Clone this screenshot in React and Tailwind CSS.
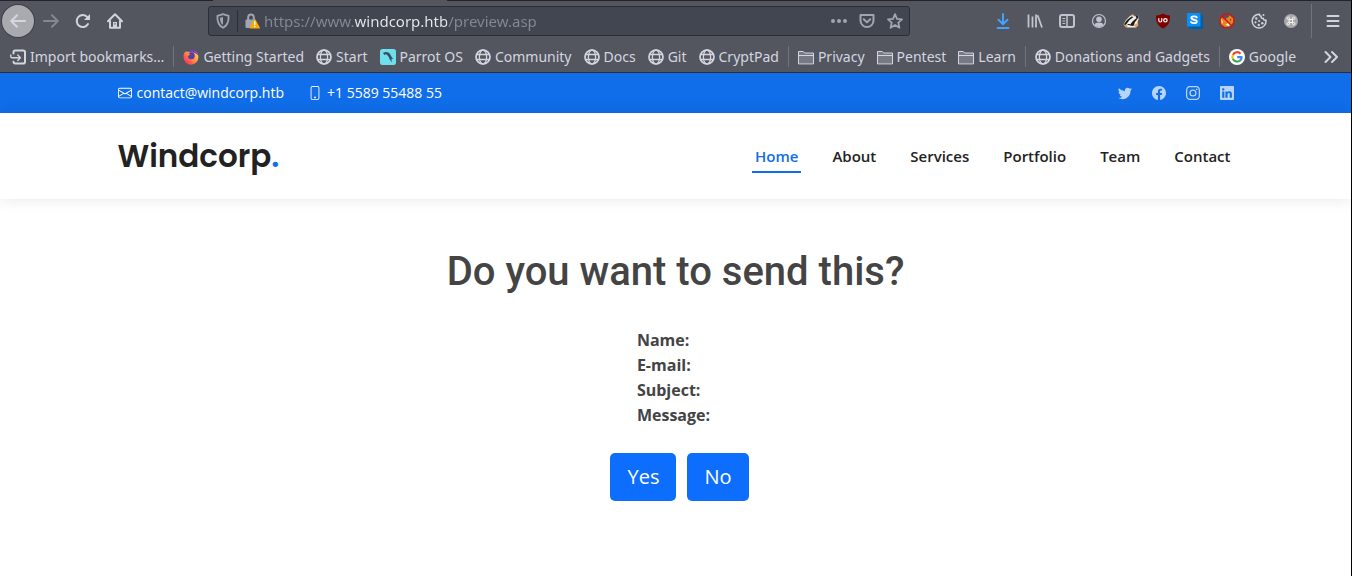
import {
  BsEnvelope,
  BsPhone,
  BsTwitter,
  BsFacebook,
  BsInstagram,
  BsLinkedin,
} from "react-icons/bs";

function Icon({ children, className = "size-4", ...rest }) {
  return (
    <svg
      viewBox="0 0 16 16"
      fill="none"
      stroke="currentColor"
      strokeWidth="2"
      strokeLinecap="round"
      strokeLinejoin="round"
      aria-hidden="true"
      className={`shrink-0 ${className}`}
      {...rest}
    >
      {children}
    </svg>
  );
}

const BackIcon = () => (
  <Icon>
    <path d="M15 8H1.5M7 2.2 1.2 8 7 13.8" />
  </Icon>
);

const ForwardIcon = () => (
  <Icon>
    <path d="M1 8h13.5M9 2.2 14.8 8 9 13.8" />
  </Icon>
);

const ReloadIcon = () => (
  <Icon>
    <path d="M13 11a6 6 0 1 1-.6-6.8" />
    <path d="M15 1v6H9z" fill="currentColor" stroke="none" />
  </Icon>
);

const HomeIcon = () => (
  <Icon>
    <path d="M1 8.3 8 1.3l7 7M3 8v6.8h10V8" />
    <path d="M6 9h4v5H6z" fill="currentColor" stroke="none" />
    <path d="M8 10.2v1.4" stroke="#53555f" strokeWidth="1.4" strokeLinecap="butt" />
  </Icon>
);

const ShieldIcon = () => (
  <Icon>
    <path d="M8 1.2 13.6 2.8c.3 5.6-.9 9.600-5.600 12C3.300 12.400 2.100 8.400 2.400 2.800z" strokeWidth="1.8" />
    <path d="M8 4v8C5.700 10.500 5 8.500 5 4.800z" fill="currentColor" stroke="none" />
  </Icon>
);

const LockWarningIcon = () => (
  <Icon>
    <path d="M4.200 7V4.400a2.800 2.800 0 0 1 5.600 0V6" />
    <rect x="1.500" y="6.500" width="9.500" height="8.500" rx="1" fill="currentColor" stroke="none" />
    <path d="M10.800 6.800 15.200 14.800H6.400z" fill="#ffa800" stroke="#ffa800" strokeWidth="1.500" />
    <path d="M10.800 8.600v3M10.800 13.500v.200" stroke="#fff" strokeWidth="1.400" />
  </Icon>
);

const DotsIcon = () => (
  <Icon>
    <g fill="currentColor" stroke="none">
      <circle cx="2" cy="8" r="2" />
      <circle cx="8" cy="8" r="2" />
      <circle cx="14" cy="8" r="2" />
    </g>
  </Icon>
);

const PocketIcon = () => (
  <Icon>
    <path d="M1.500 2h13v5.500a6.500 6.500 0 0 1-13 0z" />
    <path d="M4.800 6.300 8 9.400l3.200-3.100" />
  </Icon>
);

const StarIcon = () => (
  <Icon strokeWidth="1.800">
    <path d="m8 1.200 2 4.600 5 .5-3.700 3.400 1.100 5L8 12.100l-4.400 2.600 1.100-5L1 6.300l5-.5z" />
  </Icon>
);

const DownloadIcon = () => (
  <Icon>
    <path d="M8 1v10M3.500 6.800 8 11.200l4.500-4.400" />
    <path d="M2.500 15h11" />
  </Icon>
);

const LibraryIcon = () => (
  <Icon strokeLinecap="butt">
    <path d="M1.500 1.500v13M5.500 3.500v11M9 1.500v13M10.600 2.200 15 14.500" strokeWidth="1.800" />
  </Icon>
);

const SidebarIcon = () => (
  <Icon>
    <rect x="1" y="2" width="14" height="12" rx="2" />
    <path d="M8 2v12" strokeWidth="1.500" />
    <path d="M3.800 5.500h2M3.800 8h2M3.800 10.500h2" strokeWidth="1" />
  </Icon>
);

const AccountIcon = () => (
  <Icon>
    <circle cx="8" cy="8" r="6.500" strokeWidth="1.200" />
    <circle cx="8" cy="6.200" r="2.800" fill="currentColor" stroke="none" />
    <path d="M3.400 12c.6-2 2.200-2.600 4.600-2.600s4 .6 4.600 2.600A6 6 0 0 1 8 14a6 6 0 0 1-4.600-2z" fill="currentColor" stroke="none" />
  </Icon>
);

const BadgerIcon = () => (
  <Icon stroke="none">
    <path d="M.5 11.500 3 7l4-4L9.500 1.500 12 3.500l3.800-1-.3 4L14.500 9l.5 3-2 2.500H4z" fill="#f3eee6" />
    <path d="M.8 11.500 4 7l4.500-3.500 2 .5L6.500 7 2.800 12zM6.500 12.500 9.500 8.500 13 5.500l1.200 1L12 9l-1.500 4zM13 3l2.500-.5-.2 3-1.800.500z" fill="#1d1a18" />
    <path d="M7.500 3 9.800 1.300 12 3.300 9.800 2.800zM1 12.300l2.500-.8 1.500 2.500-2 .5zM10.500 12l4.500-2 .3 2.500-2.300 2z" fill="#e8a45c" />
    <path d="M5 11.500h1.500M9 10.800h1" stroke="#1d1a18" strokeWidth="1" />
  </Icon>
);

const BlockerIcon = () => (
  <Icon stroke="none">
    <path d="M8 .5c2 1.300 4.200 2 7 2 0 6-.8 9.800-7 13-6.200-3.200-7-7-7-13 2.800 0 5-.7 7-2z" fill="#800000" />
    <path d="M3.800 5.500v2a1.500 1.500 0 0 0 3 0v-2" stroke="#fff" strokeWidth="1.200" />
    <circle cx="10.400" cy="7.300" r="1.700" stroke="#fff" strokeWidth="1.200" />
  </Icon>
);

const StylusIcon = () => (
  <Icon stroke="none">
    <path d="M0 0h13l3 3v13H3l-3-3z" fill="#005fa8" />
    <path d="M0 0h13.500v13.500H0z" fill="#0c8ff5" />
    <path d="M9.800 4.300C8.800 3 4.300 2.900 4.300 5c0 2.200 5.500 1.200 5.500 3.500 0 2.200-4.700 2-5.800.5" stroke="#fff" strokeWidth="1.900" />
  </Icon>
);

const NoFoxIcon = () => (
  <Icon stroke="none">
    <path d="M1.500 4.500 6 6 9 4.500 11 2l1.500 2.200 2.300.8-.8 4.500-2.500 3.500L6 14l-4.500-3z" fill="#e8841c" />
    <path d="M2 5.500 4 9l-1 2zM6.500 11.500 9 10l3 .5-2.500 3z" fill="#ffe9c8" />
    <circle cx="11.500" cy="6.800" r=".700" fill="#5b2c0c" />
    <circle cx="8" cy="8" r="7.200" stroke="#d01515" strokeWidth="1.300" />
    <path d="m3 3 10 10" stroke="#d01515" strokeWidth="1.500" />
  </Icon>
);

const CookieIcon = () => (
  <Icon>
    <path d="M8.500 1.200A6.900 6.900 0 1 0 14.900 7c-1.500.7-2.700-.2-2.500-1.700-1.700.400-2.800-.600-2.200-2C9 3.200 8.400 2.300 8.500 1.200z" strokeWidth="1.500" />
    <g fill="currentColor" stroke="none">
      <circle cx="5.300" cy="5.500" r="1.200" />
      <circle cx="4.500" cy="9.300" r="1.100" />
      <circle cx="8.200" cy="8" r="1.100" />
      <circle cx="7.800" cy="12" r="1.200" />
      <circle cx="11.300" cy="10.300" r="1.200" />
      <circle cx="12.500" cy="2" r="1" />
    </g>
  </Icon>
);

const CommandIcon = () => (
  <Icon>
    <circle cx="8" cy="8" r="7" fill="#a9a9ab" stroke="none" />
    <path d="M6.500 6.500h3v3h-3zM6.500 6.500H5.300a1.200 1.200 0 1 1 1.200-1.200zM9.500 6.500V5.300a1.200 1.200 0 1 1 1.200 1.200zM9.500 9.500h1.200a1.200 1.200 0 1 1-1.200 1.200zM6.500 9.500v1.200a1.200 1.200 0 1 1-1.200-1.200z" stroke="#f5f5f5" strokeWidth="1" />
  </Icon>
);

const MenuIcon = () => (
  <Icon>
    <path d="M2.500 3h11M2.500 8h11M2.500 13h11" />
  </Icon>
);

const ImportIcon = () => (
  <Icon>
    <path d="M3.500 4.500V3.200C3.500 2 4.200 1.500 5.200 1.500h8c1.200 0 1.800.6 1.800 1.800v9.400c0 1.200-.6 1.800-1.800 1.800h-8c-1 0-1.700-.5-1.700-1.700" />
    <path d="M.8 6v1.500c0 .8.400 1.200 1.200 1.200h8M7.800 6l2.600 2.700-2.600 2.700" strokeWidth="1.400" />
  </Icon>
);

const GlobeIcon = () => (
  <Icon strokeWidth="1.300">
    <circle cx="8" cy="8" r="7" strokeWidth="1.700" />
    <ellipse cx="8" cy="8" rx="3.600" ry="7" />
    <path d="M1.800 5.500h12.400M1.800 10.500h12.400" />
  </Icon>
);

const FolderIcon = () => (
  <Icon strokeWidth="1">
    <path d="M.5 14.500v-12h4.800l1.400 1.500h8.800v10.500z" fill="#777a85" />
    <path d="M.5 6.500h15" />
  </Icon>
);

const FirefoxIcon = () => (
  <Icon stroke="none">
    <defs>
      <linearGradient id="flame" x1="14" y1="3" x2="3" y2="14" gradientUnits="userSpaceOnUse">
        <stop offset="0" stopColor="#ffd94a" />
        <stop offset=".45" stopColor="#ff9640" />
        <stop offset="1" stopColor="#ff3160" />
      </linearGradient>
    </defs>
    <path d="M2.500 2.500C.9 4.200.3 6 .5 8.500a7.400 7.400 0 0 0 14.900-.5c0-2.500-1.200-5-3.600-6.300L8 3z" fill="url(#flame)" />
    <path d="M6.500 1.500C10 0 14.500 2.200 15.200 6.500 13 4 10.500 3 7.500 3.600z" fill="#7a3bd0" />
    <circle cx="8.300" cy="6.800" r="3.500" fill="#5a3f9e" />
    <path d="M3 4.500c1.800-.5 3.500 0 4.500 1-1.500.3-2 1-2.200 2z" fill="#ff8a45" />
  </Icon>
);

const ParrotIcon = () => (
  <Icon stroke="none">
    <rect width="16" height="16" rx="2.500" fill="#6fdfee" />
    <path d="M3 4c2.500-1.500 5.700-1.200 7.300 1.500 1 1.800 1.700 3.200 3.200 4.500l-2-.3.200 4-1.300-2.800-.6-.2C9 8 7.500 5.500 5.500 5L5 6.200C4.200 5.700 3.500 5 3 4z" fill="#35525c" />
  </Icon>
);

const GoogleIcon = () => (
  <Icon stroke="none">
    <circle cx="8" cy="8" r="8" fill="#fff" />
    <g strokeWidth="2.200" strokeLinecap="butt" fill="none">
      <path d="M11.500 4.700A4.600 4.600 0 0 0 3.900 5.900" stroke="#ea4335" />
      <path d="M4 5.700a4.600 4.600 0 0 0 0 4.600" stroke="#fbbc05" />
      <path d="M3.900 10.100a4.600 4.600 0 0 0 7.100 1.400" stroke="#34a853" />
      <path d="M10.900 11.600A4.600 4.600 0 0 0 12.600 8.200H8.200" stroke="#4285f4" />
    </g>
  </Icon>
);

const extensions = [
  { label: "Downloads", icon: DownloadIcon, tone: "text-[#45a1ff]" },
  { label: "Library", icon: LibraryIcon, tone: "text-[#c0c3cf]" },
  { label: "Sidebars", icon: SidebarIcon, tone: "text-[#c0c3cf]" },
  { label: "Account", icon: AccountIcon, tone: "text-[#c0c3cf]" },
  { label: "Privacy Badger", icon: BadgerIcon, tone: "" },
  { label: "Content blocker", icon: BlockerIcon, tone: "" },
  { label: "Styles", icon: StylusIcon, tone: "" },
  { label: "Proxy off", icon: NoFoxIcon, tone: "" },
  { label: "Cookies", icon: CookieIcon, tone: "text-[#d0d2da]" },
  { label: "Commands", icon: CommandIcon, tone: "" },
];

const bookmarkGroups = [
  [{ label: "Import bookmarks…", icon: ImportIcon }],
  [
    { label: "Getting Started", icon: FirefoxIcon },
    { label: "Start", icon: GlobeIcon },
    { label: "Parrot OS", icon: ParrotIcon },
    { label: "Community", icon: GlobeIcon },
    { label: "Docs", icon: GlobeIcon },
    { label: "Git", icon: GlobeIcon },
    { label: "CryptPad", icon: GlobeIcon },
  ],
  [
    { label: "Privacy", icon: FolderIcon },
    { label: "Pentest", icon: FolderIcon },
    { label: "Learn", icon: FolderIcon },
  ],
  [{ label: "Donations and Gadgets", icon: GlobeIcon }],
  [{ label: "Google", icon: GoogleIcon }],
];

const navItems = ["Home", "About", "Services", "Portfolio", "Team", "Contact"];

const socials = [
  { label: "Twitter", icon: BsTwitter },
  { label: "Facebook", icon: BsFacebook },
  { label: "Instagram", icon: BsInstagram },
  { label: "LinkedIn", icon: BsLinkedin },
];

const fields = ["Name:", "E-mail:", "Subject:", "Message:"];

function ToolButton({ label, className = "text-[#d0d3de]", children }) {
  return (
    <button type="button" aria-label={label} className={`flex size-8 shrink-0 items-center justify-center ${className}`}>
      {children}
    </button>
  );
}

function AddressBar() {
  return (
    <div className="mx-[77px] flex h-[30px] min-w-0 flex-1 items-center rounded-[3px] border border-[#2c2e36] bg-[#414650] px-1.5 text-[#a2a5b0]">
      <button type="button" aria-label="Tracking protection">
        <ShieldIcon />
      </button>
      <span className="mx-1.5 h-[22px] w-px bg-[#2c2e36]" />
      <button type="button" aria-label="Connection security">
        <LockWarningIcon />
      </button>
      <input
        type="text"
        aria-label="Address"
        defaultValue="https://www.windcorp.htb/preview.asp"
        className="ml-1 min-w-0 flex-1 bg-[linear-gradient(to_right,#858893_91px,#e9eaef_91px,#e9eaef_183px,#858893_183px)] bg-clip-text text-[15px] text-transparent outline-none"
      />
      <div className="flex items-center gap-3">
        <button type="button" aria-label="Page actions">
          <DotsIcon />
        </button>
        <button type="button" aria-label="Save to Pocket">
          <PocketIcon />
        </button>
        <button type="button" aria-label="Bookmark this page">
          <StarIcon />
        </button>
      </div>
    </div>
  );
}

function BrowserChrome() {
  return (
    <div className="border-b border-[#2c2e36] bg-[#53555f] font-['Noto_Sans',sans-serif]">
      <div className="flex h-px justify-between bg-[#23242b]">
        <span className="ml-[213px] w-[234px] bg-[#53555f]" />
      </div>
      <div className="flex h-10 items-center px-[2px]">
        <button
          type="button"
          aria-label="Back"
          className="mr-px flex size-8 shrink-0 items-center justify-center rounded-full bg-[#a9aaaf] text-[#d3d7e2] ring-1 ring-[#3f414a]"
        >
          <BackIcon />
        </button>
        <ToolButton label="Forward" className="text-[#85878f]">
          <ForwardIcon />
        </ToolButton>
        <ToolButton label="Reload">
          <ReloadIcon />
        </ToolButton>
        <ToolButton label="Home">
          <HomeIcon />
        </ToolButton>
        <AddressBar />
        {extensions.map(({ label, icon: Glyph, tone }) => (
          <ToolButton key={label} label={label} className={tone}>
            <Glyph />
          </ToolButton>
        ))}
        <span className="mr-[5px] ml-1 h-[34px] w-px bg-[#70737c]" />
        <ToolButton label="Menu">
          <MenuIcon />
        </ToolButton>
      </div>
      <div className="flex h-[31px] items-center pl-1 pr-3 text-sm text-[#d3d6e0]">
        {bookmarkGroups.map((group, index) => (
          <div key={group[0].label} className="flex items-center">
            {index > 0 && <span className="mx-[3px] h-[21px] w-px bg-[#70737c]" />}
            {group.map(({ label, icon: Glyph }) => (
              <a key={label} href="#" className="flex items-center gap-1 whitespace-nowrap px-1.5">
                <Glyph />
                {label}
              </a>
            ))}
          </div>
        ))}
        <button type="button" aria-label="More bookmarks" className="ml-auto">
          <Icon>
            <path d="m2.500 3 5 5-5 5M9 3l5 5-5 5" />
          </Icon>
        </button>
      </div>
    </div>
  );
}

function TopBar() {
  return (
    <section className="bg-[#106eea] text-sm text-white">
      <div className="mx-auto flex h-10 max-w-[1140px] items-center justify-between px-3">
        <div className="flex items-center gap-6">
          <a href="mailto:contact@windcorp.htb" className="flex items-center gap-[5px]">
            <BsEnvelope className="size-3.5" />
            contact@windcorp.htb
          </a>
          <span className="flex items-center gap-[5px]">
            <BsPhone className="size-3.5" />
            +1 5589 55488 55
          </span>
        </div>
        <div className="flex items-center gap-5 text-white/70">
          {socials.map(({ label, icon: Glyph }) => (
            <a key={label} href="#" aria-label={label}>
              <Glyph className="size-3.5" />
            </a>
          ))}
        </div>
      </div>
    </section>
  );
}

function SiteHeader() {
  return (
    <header className="relative bg-white shadow-[0_0_15px_rgba(0,0,0,0.1)]">
      <div className="mx-auto flex h-[86px] max-w-[1140px] items-center justify-between px-3">
        <a href="#" className="font-['Poppins','Inter',sans-serif] text-[31px] font-semibold text-[#222222]">
          Windcorp<span className="text-[#106eea]">.</span>
        </a>
        <nav className="flex items-center gap-7 text-[15px] font-semibold">
          {navItems.map((item, index) => (
            <a
              key={item}
              href="#"
              className={
                index === 0
                  ? "border-y-2 border-t-transparent border-b-[#106eea] px-[3px] py-1 text-[#106eea]"
                  : "border-y-2 border-transparent px-[3px] py-1 text-[#222222]"
              }
            >
              {item}
            </a>
          ))}
        </nav>
      </div>
    </header>
  );
}

export default function App() {
  return (
    <div className="flex min-h-screen flex-col border-r border-black bg-white font-['Open_Sans',sans-serif] text-[#444444]">
      <BrowserChrome />
      <TopBar />
      <SiteHeader />
      <main className="flex flex-col items-center pt-[49px] pb-12">
        <h1 className="font-['Roboto',sans-serif] text-[40px] leading-[48px] font-medium">Do you want to send this?</h1>
        <dl className="mt-8 grid grid-cols-[auto_auto] gap-x-1 text-base leading-[25px] font-bold">
          {fields.map((field) => (
            <div key={field} className="contents">
              <dt>{field}</dt>
              <dd />
            </div>
          ))}
        </dl>
        <form className="mt-[25px] flex gap-[11px] pl-2 text-xl" onSubmit={(event) => event.preventDefault()}>
          <button type="submit" className="h-12 rounded-[5px] bg-[#0d6efd] px-[17px] text-white">
            Yes
          </button>
          <button type="button" className="h-12 rounded-[5px] bg-[#0d6efd] px-[17px] text-white">
            No
          </button>
        </form>
      </main>
    </div>
  );
}
